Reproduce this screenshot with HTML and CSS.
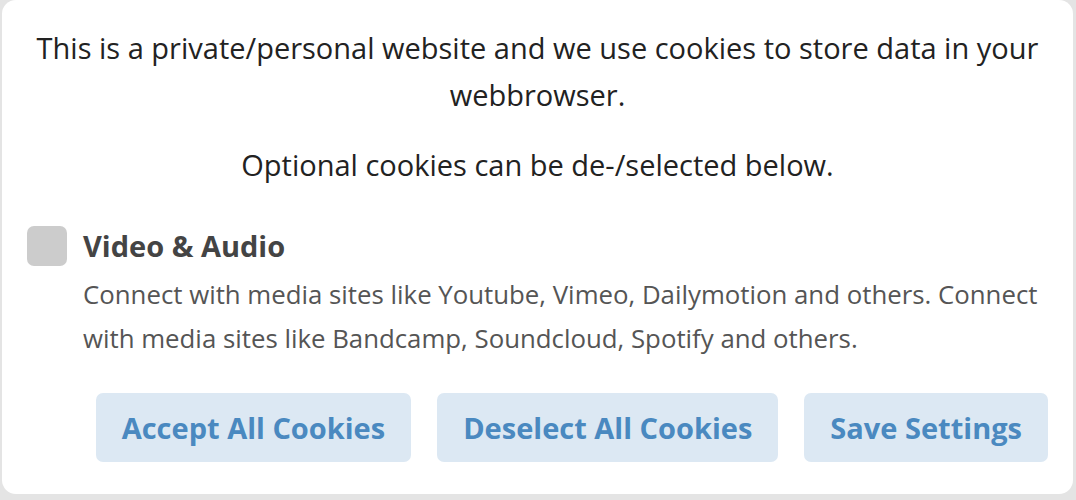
FILE: index.html
```html
<!DOCTYPE html>
<html lang="en">
<head>
  <meta charset="UTF-8">
  <meta name="viewport" content="width=device-width, initial-scale=1.0">
  <title>Cookie Settings</title>
  <link rel="stylesheet" href="styles.css">
</head>
<body>
  <div class="cookie-box">
    <p class="intro">This is a private/personal website and we use cookies to store data in your webbrowser.</p>
    <p class="intro">Optional cookies can be de-/selected below.</p>

    <div class="option">
      <span class="checkbox"></span>
      <div class="option-text">
        <div class="option-title">Video &amp; Audio</div>
        <div class="option-desc">Connect with media sites like Youtube, Vimeo, Dailymotion and others. Connect with media sites like Bandcamp, Soundcloud, Spotify and others.</div>
      </div>
    </div>

    <div class="actions">
      <button class="action">Accept All Cookies</button>
      <button class="action">Deselect All Cookies</button>
      <button class="action">Save Settings</button>
    </div>
  </div>
</body>
</html>
```

FILE: styles.css
```css
body {
  margin: 0;
  padding: 0 3px 6px 2px;
  background-color: #e4e4e4;
  font-family: "Open Sans", Arial, sans-serif;
}

.cookie-box {
  background-color: #ffffff;
  border-radius: 14px;
  height: 494px;
  box-sizing: border-box;
  padding: 24px 25px 0 25px;
}

.intro {
  margin: 0 0 23px;
  font-size: 29px;
  line-height: 47px;
  color: #222222;
  text-align: center;
}

.option {
  display: flex;
  gap: 16px;
  margin-top: 38px;
}

.checkbox {
  flex: none;
  width: 40px;
  height: 40px;
  border-radius: 7px;
  background-color: #cccccc;
}

.option-title {
  font-size: 29px;
  font-weight: 700;
  line-height: 40px;
  color: #444444;
}

.option-desc {
  margin-top: 6px;
  font-size: 25.8px;
  line-height: 44px;
  color: #555555;
}

.actions {
  display: flex;
  justify-content: flex-end;
  gap: 26px;
  margin-top: 33px;
}

.action {
  height: 69px;
  padding: 0 26px;
  border: none;
  border-radius: 7px;
  background-color: #dce8f3;
  color: #4a89c0;
  font-family: inherit;
  font-size: 29px;
  font-weight: 700;
  cursor: pointer;
}
```
